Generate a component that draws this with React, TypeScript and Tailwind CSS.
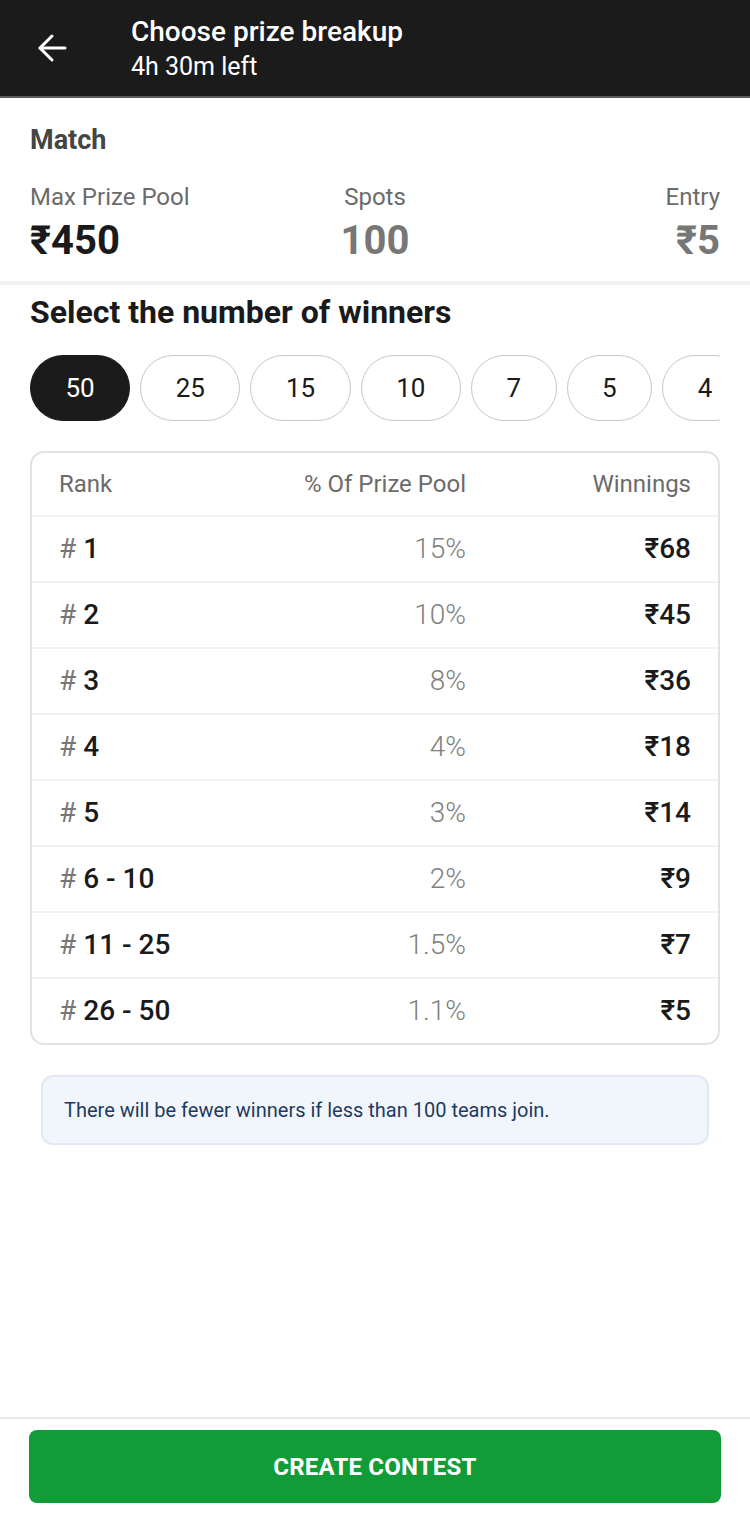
import React from 'react'

const pills = ['50', '25', '15', '10', '7', '5', '4']

const rows = [
  { rank: '1', pct: '15%', win: '₹68' },
  { rank: '2', pct: '10%', win: '₹45' },
  { rank: '3', pct: '8%', win: '₹36' },
  { rank: '4', pct: '4%', win: '₹18' },
  { rank: '5', pct: '3%', win: '₹14' },
  { rank: '6 - 10', pct: '2%', win: '₹9' },
  { rank: '11 - 25', pct: '1.5%', win: '₹7' },
  { rank: '26 - 50', pct: '1.1%', win: '₹5' },
]

export default function App() {
  return (
    <div className="min-h-[1516px] bg-white flex flex-col font-['Roboto',sans-serif]">
      {/* header */}
      <div className="h-[98px] bg-[#1b1b1b] border-b-2 border-[#5a5a5a] flex items-center">
        <div className="w-[131px] pl-[37px] flex items-center">
          <svg width="30" height="30" viewBox="0 0 30 30" fill="none" stroke="white" strokeWidth="3" strokeLinecap="round" strokeLinejoin="round">
            <path d="M28 15H3" />
            <path d="M15 3L3 15l12 12" />
          </svg>
        </div>
        <div className="flex flex-col text-white">
          <span className="text-[28px] leading-[34px] font-medium">Choose prize breakup</span>
          <span className="text-[25px] leading-[30px] mt-[3px]">4h 30m left</span>
        </div>
      </div>

      {/* match info */}
      <div className="px-[30px] pt-[26px] pb-[17px] border-b-4 border-[#f3f3f3]">
        <div className="text-[27px] leading-[32px] font-bold text-[#454545]">Match</div>
        <div className="grid grid-cols-3 mt-[27px]">
          <div className="flex flex-col items-start">
            <span className="text-[24px] leading-[28px] text-[#6b6b6b]">Max Prize Pool</span>
            <span className="text-[40px] leading-[46px] font-bold text-[#1a1a1a] mt-[7px]">₹450</span>
          </div>
          <div className="flex flex-col items-center">
            <span className="text-[24px] leading-[28px] text-[#6b6b6b]">Spots</span>
            <span className="text-[40px] leading-[46px] font-bold text-[#777777] mt-[7px]">100</span>
          </div>
          <div className="flex flex-col items-end">
            <span className="text-[24px] leading-[28px] text-[#6b6b6b]">Entry</span>
            <span className="text-[40px] leading-[46px] font-bold text-[#777777] mt-[7px]">₹5</span>
          </div>
        </div>
      </div>

      {/* winners select */}
      <div className="px-[30px] pt-[8px]">
        <div className="text-[32px] leading-[38px] font-bold text-[#1a1a1a]">Select the number of winners</div>
        <div className="mt-[24px] flex gap-[10px] overflow-hidden">
          {pills.map((p, i) => (
            <div
              key={p}
              className={
                i === 0
                  ? 'shrink-0 h-[66px] px-[34.5px] rounded-full bg-[#1b1b1b] text-white border-[1.5px] border-[#1b1b1b] flex items-center justify-center text-[26px]'
                  : 'shrink-0 h-[66px] px-[34.5px] rounded-full bg-white text-[#1a1a1a] border-[1.5px] border-[#c8c8c8] flex items-center justify-center text-[26px]'
              }
            >
              {p}
            </div>
          ))}
        </div>

        {/* table */}
        <div className="mt-[30px] border-2 border-[#e2e2e2] rounded-[14px] overflow-hidden">
          <div className="h-[64px] grid grid-cols-[210px_197px_1fr] items-center px-[27px] text-[24px] text-[#6b6b6b] border-b-2 border-[#f2f2f2]">
            <span>Rank</span>
            <span className="text-right">% Of Prize Pool</span>
            <span className="text-right">Winnings</span>
          </div>
          {rows.map((r, i) => (
            <div
              key={r.rank}
              className={
                i === rows.length - 1
                  ? 'h-[64px] grid grid-cols-[210px_197px_1fr] items-center px-[27px] text-[28px]'
                  : 'h-[66px] grid grid-cols-[210px_197px_1fr] items-center px-[27px] text-[28px] border-b-2 border-[#f2f2f2]'
              }
            >
              <span className="text-[#1a1a1a] font-medium">
                <span className="text-[#777777] font-normal">#</span> {r.rank}
              </span>
              <span className="text-right text-[#808080] font-light">{r.pct}</span>
              <span className="text-right text-[#1a1a1a] font-medium">{r.win}</span>
            </div>
          ))}
        </div>

        {/* info */}
        <div className="mt-[30px] mx-[11px] h-[70px] bg-[#f1f6fd] border-2 border-[#e0e9f5] rounded-[12px] flex items-center px-[21px]">
          <span className="text-[20px] text-[#1f3a5f]">There will be fewer winners if less than 100 teams join.</span>
        </div>
      </div>

      <div className="flex-1" />

      {/* bottom */}
      <div className="border-t-2 border-[#e8e8e8] px-[29px] pt-[11px] pb-[13px]">
        <button className="w-full h-[73px] rounded-[8px] bg-[#129c38] text-white text-[24px] font-bold tracking-[0.2px] flex items-center justify-center">
          CREATE CONTEST
        </button>
      </div>
    </div>
  )
}
